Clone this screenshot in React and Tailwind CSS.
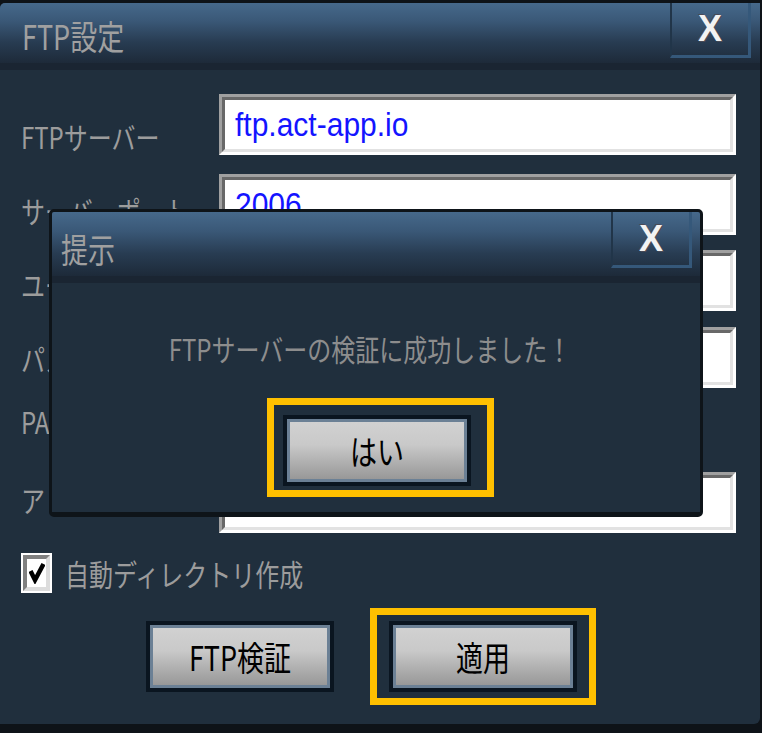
import React from 'react'

const jp = "font-['Noto_Sans_CJK_JP',sans-serif]"

const Tall = ({ children, className = '' }) => (
    <span className={`inline-block scale-y-[1.25] leading-none ${jp} ${className}`}>{children}</span>
)

const CloseX = () => (
    <span className="font-['Liberation_Sans',sans-serif] font-bold text-[36px] leading-none text-[#f2f2f2] [text-shadow:1px_1px_0_#4a4a55,-1px_-1px_0_#4a4a55]">
        X
    </span>
)

const Field = ({ value }) => (
    <div className="w-[517px] h-[61px] border-[3px] border-t-[#a0a0a0] border-l-[#a0a0a0] border-b-white border-r-white">
        <div className="h-full flex items-center pl-[10px] bg-white border-[3px] border-t-[#686868] border-l-[#686868] border-b-[#e2e2e2] border-r-[#e2e2e2]">
            <span className="font-['Liberation_Sans',sans-serif] text-[30px] leading-none text-[#1414ff] scale-y-[1.1] inline-block">
                {value}
            </span>
        </div>
    </div>
)

const Btn = ({ children }) => (
    <div className="w-[188px] h-[71px] border-4 border-[#0a1520]">
        <div className="h-full flex items-center justify-center border-[3px] border-[#6b8095] bg-[linear-gradient(to_bottom,#d1d1d1_0%,#c9c9c9_40%,#b0b0b0_70%,#989898_100%)]">
            <Tall className="text-[27px] text-black">{children}</Tall>
        </div>
    </div>
)

// labelPad shifts the label off the input's centre line, as in the original
const Row = ({ label, value, className = '', labelPad = 'pt-[25px]' }) => (
    <div className={`flex h-[61px] ${className}`}>
        <div className={`w-[219px] pl-[21px] flex items-center ${labelPad}`}>
            <Tall className="text-[24px] text-[#9c9c9c] whitespace-nowrap">{label}</Tall>
        </div>
        {value !== undefined && <Field value={value} />}
    </div>
)

const TitleBar = ({ title, height, closeClass }) => (
    <div className={`flex ${height} border-b-[7px] border-[#1a2532] bg-[linear-gradient(to_bottom,#46698b_0%,#3a5877_30%,#283c52_65%,#1d2a39_100%)]`}>
        <div className="flex-1 flex items-center">{title}</div>
        <div className={`flex items-center justify-center border-l-2 border-l-[#213549] border-b-[3px] border-r-[3px] border-b-[#35587a] border-r-[#35587a] ${closeClass}`}>
            <CloseX />
        </div>
    </div>
)

export default function App() {
    return (
        <div className="relative w-[762px] h-[733px] bg-[#0e1318] overflow-hidden">
            {/* main dialog */}
            <div className="h-[724px] pt-[3px] pr-[2px] bg-[#0e1318]">
                <div className="h-full rounded-tl-[5px] rounded-br-[6px] overflow-hidden bg-[#202f3d] flex flex-col">
                    <TitleBar
                        height="h-[67px]"
                        closeClass="w-[81px] h-[55px] mr-[9px]"
                        title={<Tall className="ml-[22px] mt-[4px] text-[27px] text-[#a0a0a0]">FTP設定</Tall>}
                    />

                    <div className="pt-[24px] flex flex-col">
                        <Row label="FTPサーバー" value="ftp.act-app.io" labelPad="pt-[22px]" />
                        <Row label="サーバーポート" value="2006" className="mt-[19px]" labelPad="pt-[11px]" />
                        <Row label="ユーザー名" value="" className="mt-[15px]" labelPad="pt-[6px]" />
                        <Row label="パスワード" value="" className="mt-[16px]" labelPad="pt-0" />
                        <Row label="PASVモード" className="mt-[16px]" labelPad="pb-[28px]" />
                        <Row label="アドレス" value="/" className="mt-[7px]" labelPad="pb-[8px]" />

                        {/* checkbox */}
                        <div className="mt-[20px] ml-[21px] flex items-center gap-[13px]">
                            <div className="w-[31px] h-[40px] border-2 border-white bg-white">
                                <div className="h-full border-[4px] border-t-[#808080] border-l-[#808080] border-b-[#dcdcdc] border-r-[#dcdcdc] bg-white flex items-center justify-center">
                                    <svg width="16" height="22" viewBox="0 0 16 22">
                                        <path d="M1.5 9 L6 18 L14.5 2" fill="none" stroke="#000" strokeWidth="4.5" />
                                    </svg>
                                </div>
                            </div>
                            <Tall className="text-[24px] text-[#9c9c9c] whitespace-nowrap">自動ディレクトリ作成</Tall>
                        </div>

                        {/* buttons */}
                        <div className="mt-[15px] pl-[146px] flex items-center gap-[36px]">
                            <Btn>FTP検証</Btn>
                            <div className="w-[226px] h-[97px] border-[7px] border-[#ffc000] flex items-center justify-center">
                                <Btn>適用</Btn>
                            </div>
                        </div>
                    </div>
                </div>
            </div>

            {/* popup */}
            <div className="absolute left-[49px] top-[209px] w-[654px] h-[308px] border-[3px] border-b-[5px] border-[#0e1419] rounded-[5px] overflow-hidden bg-[#202f3d] flex flex-col">
                <TitleBar
                    height="h-[71px]"
                    closeClass="w-[81px] h-[56px] mr-[8px]"
                    title={<Tall className="ml-[9px] mt-[8px] text-[27px] text-[#a0a0a0]">提示</Tall>}
                />
                <div className="flex flex-col items-center pt-[53px]">
                    <Tall className="text-[24px] text-[#8d8d8d] whitespace-nowrap -ml-[12px]">FTPサーバーの検証に成功しました！</Tall>
                    <div className="mt-[38px] ml-[9px] w-[227px] h-[99px] border-[7px] border-[#ffc000] pl-[9px] pt-[10px]">
                        <Btn>はい</Btn>
                    </div>
                </div>
            </div>
        </div>
    )
}
